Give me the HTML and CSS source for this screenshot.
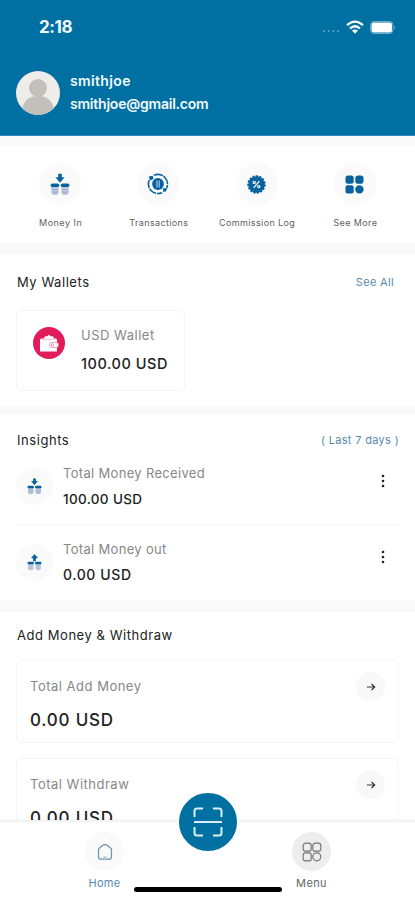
FILE: index.html
```html
<!DOCTYPE html>
<html lang="en">
<head>
<meta charset="utf-8">
<meta name="viewport" content="width=device-width, initial-scale=1">
<title>Wallet</title>
<link rel="stylesheet" href="styles.css">
</head>
<body>
<svg class="defs" aria-hidden="true">
  <symbol id="money" viewBox="0 0 22 24">
    <path fill="#07629f" d="M9 0h4v4h3l-5 6-5-6h3z"/>
    <g fill="#b9c6dc"><rect x="1.500" y="12" width="8" height="11.500" rx="3"/><rect x="12.500" y="12" width="8" height="11.500" rx="3"/></g>
    <g stroke="#8aa5ca" stroke-width=".7" fill="none"><path d="M2 17q3.500 2 7 0M2 20q3.500 2 7 0M13 17q3.500 2 7 0M13 20q3.500 2 7 0"/></g>
    <g fill="#07629f"><rect x=".7" y="11" width="9.500" height="3.700" rx="1.800"/><rect x="11.800" y="11" width="9.500" height="3.700" rx="1.800"/></g>
  </symbol>
  <symbol id="arrow" viewBox="0 0 10 10">
    <path d="M1 5h8M5.500 2L8.700 5 5.500 8" fill="none" stroke="#333" stroke-width="1.200"/>
  </symbol>
</svg>
<div class="screen">
  <header class="header">
    <div class="status">
      <span class="time">2:18</span>
      <div class="signals">
        <svg class="dots" viewBox="0 0 18 4"><g fill="#5ba3ca"><circle cx="2" cy="2" r="1.100"/><circle cx="6.700" cy="2" r="1.100"/><circle cx="11.300" cy="2" r="1.100"/><circle cx="16" cy="2" r="1.100"/></g></svg>
        <svg class="wifi" viewBox="0 0 18 14"><g fill="none" stroke="#fff" stroke-width="2.300"><path d="M1 5.200q8-7.200 16 0"/><path d="M4 8.500q5-4.400 10 0"/></g><path d="M6 10.600q3-2.400 6 0L9 13.700z" fill="#fff"/></svg>
        <svg class="battery" viewBox="0 0 26 13"><rect x=".5" y=".5" width="22.500" height="12" rx="3.500" fill="none" stroke="#69acd0"/><rect x="1.500" y="1.500" width="20.500" height="10" rx="2" fill="#fff"/><path d="M24.200 4.500q2 2 0 4z" fill="#69acd0"/></svg>
      </div>
    </div>
    <div class="profile">
      <svg class="avatar" viewBox="0 0 44 44"><defs><clipPath id="round"><circle cx="22" cy="22" r="22"/></clipPath></defs><g clip-path="url(#round)"><path fill="#eeede9" d="M0 0h44v44H0z"/><g fill="#c3c0bb"><circle cx="22" cy="17" r="9"/><path d="M6 38q3-13 16-13t16 13v6H6z"/></g></g></svg>
      <div class="identity"><div class="username">smithjoe</div><div class="email">smithjoe@gmail.com</div></div>
    </div>
  </header>

  <main>
    <nav class="section quick">
      <div class="action"><div class="bubble"><svg class="ic-money" viewBox="0 0 22 24"><use href="#money"/></svg></div><span class="q1">Money In</span></div>
      <div class="action"><div class="bubble"><svg class="ic-trans" viewBox="0 0 22 22"><g fill="none" stroke="#07629f" stroke-width="1.600"><path d="M2.300 7A9.600 9.600 0 0 0 15 19.700" stroke-dasharray="8 .8"/><path d="M7 2.300A9.600 9.600 0 0 1 19.700 15" stroke-dasharray="9 .8"/></g><circle cx="11" cy="11" r="5.900" fill="#07629f"/><path d="M1.800 3.500l4-.8.7 3.300-3.500 1.500zM16 18.700l.2-3.700 4.100.5-1.500 3z" fill="#07629f"/><path d="M10 7.500v7M12.200 7.500v7" fill="none" stroke="#c4d8e8" stroke-width="1"/></svg></div><span class="q2">Transactions</span></div>
      <div class="action"><div class="bubble"><svg class="ic-comm" viewBox="0 0 20 20"><circle cx="10" cy="10" r="8.600" fill="#07629f"/><circle cx="10" cy="10" r="8.600" fill="none" stroke="#07629f" stroke-width="2.200" stroke-dasharray="2.300 1.300"/><path d="M7 13.500l6-7" stroke="#fff" stroke-width="1.300"/><g fill="none" stroke="#fff" stroke-width="1.200"><circle cx="7.600" cy="7.800" r="1.200"/><circle cx="12.400" cy="12.200" r="1.200"/></g></svg></div><span class="q3">Commission Log</span></div>
      <div class="action"><div class="bubble"><svg class="ic-more" viewBox="0 0 19 19"><g fill="#07629f"><rect x=".5" y=".5" width="8.200" height="8.200" rx="2.500"/><rect x="10.300" y=".5" width="8.200" height="8.200" rx="2.800"/><rect x=".5" y="10.300" width="8.200" height="8.200" rx="2"/><circle cx="14.400" cy="14.400" r="4.200"/></g></svg></div><span class="q4">See More</span></div>
    </nav>

    <section class="section wallets">
      <div class="heading"><h2 class="t-wallets">My Wallets</h2><a class="see-all">See All</a></div>
      <div class="wallet">
        <svg class="wallet-icon" viewBox="0 0 32 32"><circle cx="16" cy="16" r="16" fill="#e21b5a"/><path d="M7 13q0-1.500 1.500-1.500H11l1-2.200h2.500q1.500-3 3 0H20l1 2.200h1.500Q24 11.500 24 13v11.500H7z" fill="#fff"/><path d="M9 12.300h13" stroke="#f3a0bb" stroke-width=".7"/><rect x="16.500" y="15.300" width="9" height="5.200" rx="2.600" fill="#fff" stroke="#ee86a8" stroke-width=".8"/><circle cx="19.500" cy="17.900" r="1.200" fill="#fff" stroke="#e86b94" stroke-width=".7"/></svg>
        <div><div class="label w-label">USD Wallet</div><div class="amount w-amount">100.00 USD</div></div>
      </div>
    </section>

    <section class="section insights">
      <div class="heading"><h2 class="t-insights">Insights</h2><span class="period">( Last 7 days )</span></div>
      <div class="row"><div class="bubble small"><svg viewBox="0 0 22 24"><use href="#money"/></svg></div><div class="row-text"><div class="label i-label1">Total Money Received</div><div class="amount i-amount1">100.00 USD</div></div><svg class="kebab" viewBox="0 0 4 14"><g fill="#222"><circle cx="2" cy="2" r="1.300"/><circle cx="2" cy="7" r="1.300"/><circle cx="2" cy="12" r="1.300"/></g></svg></div>
      <div class="row second"><div class="bubble small"><svg viewBox="0 0 22 24"><path fill="#07629f" d="M11 0l5 5-3 1v4H9V6L6 5z"/><g fill="#b9c6dc"><rect x="1.500" y="12" width="8" height="11.500" rx="3"/><rect x="12.500" y="12" width="8" height="11.500" rx="3"/></g><g fill="#07629f"><rect x=".7" y="11" width="9.500" height="3.700" rx="1.800"/><rect x="11.800" y="11" width="9.500" height="3.700" rx="1.800"/></g></svg></div><div class="row-text"><div class="label i-label2">Total Money out</div><div class="amount i-amount2">0.00 USD</div></div><svg class="kebab" viewBox="0 0 4 14"><g fill="#222"><circle cx="2" cy="2" r="1.300"/><circle cx="2" cy="7" r="1.300"/><circle cx="2" cy="12" r="1.300"/></g></svg></div>
    </section>

    <section class="section totals">
      <h2 class="t-totals">Add Money &amp; Withdraw</h2>
      <div class="total"><div><div class="label c-label">Total Add Money</div><div class="amount c-amount">0.00 USD</div></div><div class="go"><svg viewBox="0 0 10 10"><use href="#arrow"/></svg></div></div>
      <div class="total"><div><div class="label c-label">Total Withdraw</div><div class="amount c-amount">0.00 USD</div></div><div class="go"><svg viewBox="0 0 10 10"><use href="#arrow"/></svg></div></div>
    </section>
  </main>

  <footer class="tabbar">
    <div class="tab home"><div class="tab-icon"><svg viewBox="0 0 18 18"><path d="M2.500 7Q2.500 5.500 4 4.500L7 2.200q2-1.300 4 0l3 2.300q1.500 1 1.500 2.500v7q0 2.200-2.200 2.200H4.700Q2.500 16.200 2.500 14z" fill="none" stroke="#6791b5" stroke-width="1.200"/><path d="M7 16v-1.500q2-3 4 0V16" fill="#b5cadb"/></svg></div><span>Home</span></div>
    <div class="tab menu"><div class="tab-icon"><svg viewBox="0 0 20 20"><g fill="none" stroke="#777" stroke-width="1.200"><rect x="1.200" y="1.200" width="8" height="8" rx="2.500"/><rect x="10.800" y="1.200" width="8" height="8" rx="2.500"/><rect x="1.200" y="10.800" width="8" height="8" rx="2"/><circle cx="14.800" cy="14.800" r="4"/></g></svg></div><span>Menu</span></div>
    <div class="scan"><svg viewBox="0 0 30 30"><path d="M1.500 10V4q0-2.500 2.500-2.500h6M20 1.500h6q2.500 0 2.500 2.500v6M1.500 20v6q0 2.500 2.500 2.500h6M20 28.500h6q2.500 0 2.500-2.500v-6M1 15h28" fill="none" stroke="#d9f0fa" stroke-width="2"/></svg></div>
    <div class="indicator"></div>
  </footer>
</div>
</body>
</html>
```
FILE: styles.css
```css
* { box-sizing: border-box; }
body { margin: 0; font-family: Inter, "Liberation Sans", sans-serif; background: #fff; }
h2 { margin: 0; }
svg { display: block; flex: none; }
.defs { position: absolute; width: 0; height: 0; }
.screen { position: relative; width: 415px; height: 900px; overflow: hidden; background: #f9f9f9; }

.header { height: 136px; background: #0070a2; border-bottom: 1px solid #3488b8; color: #f3faff; }
.status { display: flex; justify-content: space-between; height: 71px; padding: 17px 19px 0 39px; }
.time { font-size: 17px; line-height: 20px; font-weight: 700; letter-spacing: -.4px; }
.signals { display: flex; height: 20px; align-items: center; }
.dots { width: 18px; height: 4px; margin: 8px 6px 0 0; }
.wifi { width: 18px; height: 14px; margin-right: 6px; }
.battery { width: 26px; height: 13px; }
.profile { display: flex; gap: 10px; padding-left: 16px; }
.avatar { width: 44px; height: 44px; }
.identity { font-size: 14px; font-weight: 600; line-height: 23px; margin-top: -2px; white-space: nowrap; }
.username { letter-spacing: .35px; }
.email { letter-spacing: -.22px; }

.section { background: #fff; padding: 0 16px; margin-bottom: 10px; }
.quick { margin-top: 10px; height: 97px; padding: 17px 11px 0; display: grid; grid-template-columns: repeat(4, 1fr); }
.action { display: flex; flex-direction: column; align-items: center; white-space: nowrap; }
.action span { font-size: 9px; line-height: 12px; margin: 12px -1px 0 0; color: #606060; letter-spacing: .38px; }
.action .q1 { letter-spacing: .5px; }
.bubble { width: 42px; height: 42px; border-radius: 50%; background: #fafafa; display: flex; align-items: center; justify-content: center; }
.ic-money { width: 20px; height: 23px; }
.ic-trans { width: 22px; height: 22px; }
.ic-comm { width: 19px; height: 19px; }
.ic-more { width: 19px; height: 19px; }

.wallets { height: 152px; margin-top: 11px; padding-top: 18px; margin-bottom: 9px; }
.heading { display: flex; justify-content: space-between; padding-left: 1px; }
h2 { font-size: 13px; line-height: 20px; font-weight: 400; color: #222; white-space: nowrap; letter-spacing: .55px; }
.see-all, .period { font-size: 11px; line-height: 20px; color: #5689b0; white-space: nowrap; letter-spacing: .33px; }
.see-all { margin-right: 5px; }
.wallet { width: 169px; height: 81px; margin-top: 18px; padding: 15px 0 0 16px; border: 1.500px solid #f5f5f5; border-radius: 5px; display: flex; gap: 16px; }
.wallet-icon { width: 32px; height: 32px; margin-top: 1px; }
.label { font-size: 13px; line-height: 18px; color: #878787; white-space: nowrap; letter-spacing: .5px; }
.amount { color: #222; font-weight: 500; white-space: nowrap; }
.w-amount { font-size: 14.500px; line-height: 20px; margin-top: 10px; letter-spacing: .55px; }

.insights { height: 185px; padding-top: 15px; margin-bottom: 12px; }
.row { display: flex; height: 75px; padding-top: 14px; }
.heading + .row { border-bottom: 2px solid #f9f9f9; height: 76px; }
.bubble.small { width: 37px; height: 37px; margin-top: 4px; }
.bubble.small svg { width: 15px; height: 17px; }
.row-text { flex: 1; padding-left: 10px; }
.row .label { letter-spacing: .32px; }
.i-amount1, .i-amount2 { font-size: 13.500px; line-height: 18px; margin-top: 8px; letter-spacing: .35px; }
.i-amount2 { font-size: 14px; letter-spacing: .6px; }
.kebab { width: 4px; height: 14px; margin: 10px 14px 0 0; }

.totals { height: 300px; padding-top: 13px; margin-bottom: 0; }
.totals h2 { padding-left: 1px; }
.total { height: 83px; margin-top: 15px; border: 1.500px solid #f5f5f5; border-radius: 5px; display: flex; justify-content: space-between; padding: 16px 13px 0; }
.c-amount { font-size: 17px; line-height: 22px; margin-top: 14px; letter-spacing: .8px; }
.go { width: 29px; height: 29px; margin-top: -5px; border-radius: 50%; background: #f8f8f8; display: flex; align-items: center; justify-content: center; }
.go svg { width: 10px; height: 10px; }

.tabbar { position: absolute; left: 0; right: 0; bottom: 0; height: 80px; background: #fff; border-top: 2px solid #f3f3f3; box-shadow: 0 -1px 2px #00000008; display: flex; justify-content: space-between; padding: 10px 84px 0 85px; }
.tab { width: 39px; display: flex; flex-direction: column; align-items: center; color: #666; }
.tab-icon { width: 39px; height: 39px; border-radius: 50%; background: #fafafa; display: flex; align-items: center; justify-content: center; }
.tab svg { width: 18px; height: 18px; }
.tab span { font-size: 11px; line-height: 14px; margin-top: 5px; letter-spacing: .35px; }
.home { color: #5689b0; }
.menu .tab-icon { background: #ededed; }
.menu svg { width: 20px; height: 20px; }
.scan { position: absolute; left: 177px; top: -31px; width: 62px; height: 62px; border: 2px solid #fff; border-radius: 50%; background: #0070a2; display: flex; align-items: center; justify-content: center; }
.scan svg { width: 30px; height: 30px; }
.indicator { position: absolute; left: 134px; bottom: 8px; width: 148px; height: 5px; border-radius: 3px; background: #000; }
```
